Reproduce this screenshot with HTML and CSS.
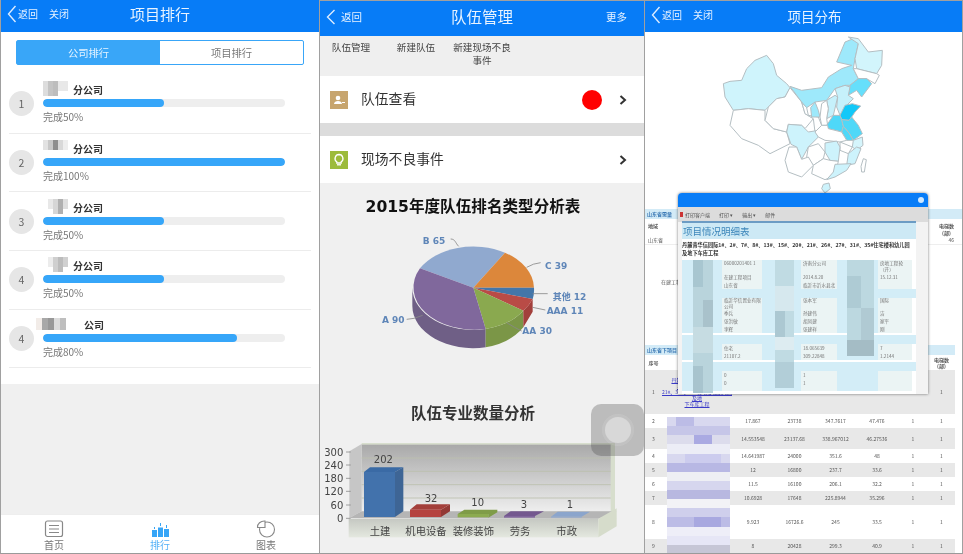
FILE: index.html
```html
<!DOCTYPE html>
<html lang="zh">
<head>
<meta charset="utf-8">
<title>项目排行 / 队伍管理 / 项目分布</title>
<link rel="stylesheet" href="styles.css">
</head>
<body>
<main class="screens">

<section class="panel rank">
  <header class="bar bar-a">
    <svg class="back" viewBox="0 0 10 18"><path d="M8.500 1 1.500 9l7 8"/></svg>
    <span class="bar-link">返回</span><span class="bar-link close">关闭</span>
    <h1 class="bar-title">项目排行</h1>
  </header>
  <div class="body-white">
    <div class="tabs"><span class="tab on">公司排行</span><span class="tab">项目排行</span></div>
    <ul class="list">
      <li class="item"><span class="num">1</span><div class="info">
        <div class="name"><svg class="mosaic" viewBox="0 0 6 3"><rect width="1" height="3" x="0" fill="#ddd"/><rect width="1" height="3" x="1" fill="#c4c4c4"/><rect width="1" height="3" x="2" fill="#bdbdbd"/><rect width="2" height="2" x="3" fill="#e8e8e8"/></svg><b>分公司</b></div>
        <div class="track"><div class="fill" style="width:50%"></div></div><div class="done">完成50%</div></div></li>
      <li class="item"><span class="num">2</span><div class="info">
        <div class="name"><svg class="mosaic" viewBox="0 0 6 3"><rect width="1" height="2" x="0" fill="#e2e2e2"/><rect width="1" height="2" x="1" fill="#c8c8c8"/><rect width="1" height="2" x="2" fill="#8e8e8e"/><rect width="1" height="2" x="3" fill="#d8d8d8"/><rect width="1" height="2" x="4" fill="#ededed"/></svg><b>分公司</b></div>
        <div class="track"><div class="fill" style="width:100%"></div></div><div class="done">完成100%</div></div></li>
      <li class="item"><span class="num">3</span><div class="info">
        <div class="name"><svg class="mosaic" viewBox="0 0 6 3"><rect width="1" height="2" x="1" fill="#e8e8e8"/><rect width="1" height="3" x="2" fill="#d6d6d6"/><rect width="1" height="3" x="3" fill="#b0b0b0"/><rect width="1" height="2" x="4" fill="#dedede"/></svg><b>分公司</b></div>
        <div class="track"><div class="fill" style="width:50%"></div></div><div class="done">完成50%</div></div></li>
      <li class="item"><span class="num">4</span><div class="info">
        <div class="name"><svg class="mosaic" viewBox="0 0 6 3"><rect width="1" height="2" x="1" fill="#ececec"/><rect width="1" height="3" x="2" fill="#cfcfcf"/><rect width="1" height="3" x="3" fill="#bcbcbc"/><rect width="1" height="2" x="4" fill="#d0d0d0"/></svg><b>分公司</b></div>
        <div class="track"><div class="fill" style="width:50%"></div></div><div class="done">完成50%</div></div></li>
      <li class="item"><span class="num">4</span><div class="info">
        <div class="name wide"><svg class="mosaic" viewBox="0 0 8 2"><rect width="1" height="2" fill="#f2ece8"/><rect width="1" height="2" x="1" fill="#a8a8a8"/><rect width="1" height="2" x="2" fill="#989898"/><rect width="1" height="2" x="3" fill="#dcdcdc"/><rect width="1" height="2" x="4" fill="#bebebe"/></svg><b>公司</b></div>
        <div class="track"><div class="fill" style="width:80%"></div></div><div class="done">完成80%</div></div></li>
    </ul>
  </div>
  <div class="filler"></div>
  <nav class="tabbar">
    <a class="tb-item"><svg class="tb-icon" viewBox="0 0 20 18"><rect x="1.500" y="1" width="17" height="15.500" rx="2" fill="none" stroke="#888" stroke-width="1.200"/><path d="M5 5.500h10M5 9h10M5 12.500h10" stroke="#888" stroke-width="1.200"/></svg>首页</a>
    <a class="tb-item active"><svg class="tb-icon" viewBox="0 0 20 18"><path d="M2 10h5v7H2zM8 7.500h5V17H8zM14 9h5v8h-5zM4 7h1v2H4zM10 3h1v3h-1zM16 5h1v3h-1z" fill="#36a5f7"/></svg>排行</a>
    <a class="tb-item"><svg class="tb-icon" viewBox="0 0 20 18"><circle cx="11" cy="9.500" r="7.500" fill="none" stroke="#888" stroke-width="1.100"/><path d="M1.500 7.500A7 6 0 0 1 9 1v6.500z" fill="#fff" stroke="#888" stroke-width="1.100"/></svg>图表</a>
  </nav>
</section>

<section class="panel team">
  <header class="bar bar-b">
    <svg class="back thin" viewBox="0 0 10 18"><path d="M8.500 2 1.500 9l7 7"/></svg>
    <span class="bar-link">返回</span>
    <h1 class="bar-title">队伍管理</h1>
    <span class="bar-more">更多</span>
  </header>
  <div class="subnav"><span class="sub s1">队伍管理</span><span class="sub s2">新建队伍</span><span class="sub s3">新建现场不良事件</span></div>
  <div class="row-link">
    <span class="ico tan"><svg viewBox="0 0 18 18"><circle cx="8" cy="7" r="2.300" fill="#fff"/><path d="M4 13c0-2 2-3 4-3s4 1 4 3zM12 11h3v1h-3z" fill="#fff"/></svg></span>
    <span class="row-text">队伍查看</span><span class="dot"></span><svg class="chev" viewBox="0 0 8 10"><path d="M1.500 1 6 5 1.500 9"/></svg>
  </div>
  <div class="gap"></div>
  <div class="row-link">
    <span class="ico green"><svg viewBox="0 0 18 18"><path d="M9 3.500a4 4 0 0 1 2.200 7.300V12H6.800v-1.200A4 4 0 0 1 9 3.500z" fill="none" stroke="#fff" stroke-width="1.300"/><path d="M7 13.800h4" stroke="#fff" stroke-width="1.300"/></svg></span>
    <span class="row-text">现场不良事件</span><svg class="chev push" viewBox="0 0 8 10"><path d="M1.500 1 6 5 1.500 9"/></svg>
  </div>
  <div class="charts">
    <h2 class="chart-title first">2015年度队伍排名类型分析表</h2>
    <svg class="pie" viewBox="0 0 840 480">
      <path d="M217 293A183 127 0 0 0 437 417V472A183 127 0 0 1 217 348Z" fill="#6f5f86"/>
      <path d="M437 417A183 127 0 0 0 550 362V412A183 127 0 0 1 437 472Z" fill="#7b9647"/>
      <path d="M550 362A183 127 0 0 0 578 327V365L550 412Z" fill="#a23f3b"/>
      <path d="M400 293L240 235A183 127 0 0 1 495 188Z" fill="#90a9cf"/>
      <path d="M400 293L495 188A183 127 0 0 1 582 293Z" fill="#dc873b"/>
      <path d="M400 293H582A183 127 0 0 1 578 327Z" fill="#4476a9"/>
      <path d="M400 293L578 327A183 127 0 0 1 550 362Z" fill="#b94b46"/>
      <path d="M400 293L550 362A183 127 0 0 1 437 417Z" fill="#8aa94f"/>
      <path d="M400 293L437 417A183 127 0 0 1 240 235Z" fill="#80689c"/>
      <g fill="none" stroke="#888" stroke-width="2.500">
        <path d="M332 147c14 0 14 12 24 22M560 232q20-12 42-14M578 311h45M578 352l38 8M500 398q24 15 45 25M200 388q20 0 48-12"/>
      </g>
      <g class="pie-label">
        <text x="248" y="161">B 65</text><text x="615" y="237">C 39</text><text x="638" y="331">其他 12</text><text x="620" y="373">AAA 11</text><text x="547" y="433">AA 30</text><text x="126" y="398">A 90</text>
      </g>
    </svg>
    <h2 class="chart-title second">队伍专业数量分析</h2>
    <svg class="bars" viewBox="0 0 975 252">
      <defs>
        <linearGradient id="wall" x1="0" y1="0" x2="0" y2="1"><stop offset="0" stop-color="#a9a9a9"/><stop offset="1" stop-color="#eeeeee"/></linearGradient>
        <linearGradient id="plate" x1="0" y1="0" x2="0" y2="1"><stop offset="0" stop-color="#c5c8c2"/><stop offset="1" stop-color="#e4e8df"/></linearGradient>
      </defs>
      <rect x="125" y="0" width="760" height="205" fill="#d7decd"/>
      <rect x="125" y="5" width="747" height="200" fill="url(#wall)"/>
      <path d="M88 25 125 3V205L88 225Z" fill="#c6c6c6"/>
      <path d="M88 225 125 205H890L835 227Z" fill="#b5b5b5"/>
      <rect x="86" y="227" width="749" height="56" fill="url(#plate)"/>
      <path d="M835 227 890 196V250L835 283Z" fill="#d6dccb"/>
      <path d="M125 45H872M125 85H872M125 125H872M125 165H872" stroke="#bcbfad" stroke-width="2.500"/>
      <path d="M78 27H92M78 66H92M78 106H92M78 145H92M78 186H92M78 226H92" stroke="#777" stroke-width="2"/>
      <g fill="#3e6595"><path d="M225 87 250 73V205L225 222Z"/></g>
      <path d="M132 87 150 73H250L225 87Z" fill="#3a6aa5"/>
      <rect x="132" y="87" width="93" height="135" fill="#4272ac"/>
      <path d="M363 200 390 184V205L363 222Z" fill="#933935"/><path d="M270 200 290 184H390L363 200Z" fill="#a33f3b"/><rect x="270" y="200" width="93" height="22" fill="#b5433f"/>
      <path d="M413 213 433 200H532L505 213ZM505 213 532 200V208L505 224Z" fill="#7f9c48"/><rect x="413" y="213" width="92" height="10" fill="#8cab50"/>
      <path d="M552 219 572 205H672L645 219Z" fill="#74588f"/><rect x="552" y="219" width="93" height="5" fill="#80659d"/>
      <path d="M693 221 713 206H810L785 221Z" fill="#8ba5cc"/><rect x="693" y="221" width="92" height="3" fill="#92abd0"/>
      <g class="axis">
        <text x="70" y="38">300</text><text x="70" y="77">240</text><text x="70" y="117">180</text><text x="70" y="156">120</text><text x="70" y="197">60</text><text x="70" y="237">0</text>
      </g>
      <g class="val">
        <text x="190" y="61">202</text><text x="333" y="176">32</text><text x="473" y="190">10</text><text x="612" y="195">3</text><text x="750" y="195">1</text>
      </g>
      <g class="cat">
        <text x="180" y="276">土建</text><text x="318" y="276">机电设备</text><text x="460" y="276">装修装饰</text><text x="600" y="276">劳务</text><text x="740" y="276">市政</text>
      </g>
    </svg>
  </div>
  <div class="assist"><span class="assist-ring"></span></div>
</section>

<section class="panel dist">
  <header class="bar bar-a">
    <svg class="back" viewBox="0 0 10 18"><path d="M8.500 1 1.500 9l7 8"/></svg>
    <span class="bar-link">返回</span><span class="bar-link close">关闭</span>
    <h1 class="bar-title">项目分布</h1>
  </header>
  <svg class="map" viewBox="0 96 954 520">
    <g stroke="#b4bec2" stroke-width="3" stroke-linejoin="round">
      <path fill="#cff4fc" d="M235 250 255 243 290 240 305 205 330 180 365 165 385 190 395 225 425 250 435 262 420 290 395 295 370 320 360 330 310 325 265 330 240 290Z"/>
      <path fill="#fff" d="M265 330 310 325 360 330 360 360 385 385 425 395 435 430 405 445 375 460 340 435 290 415 255 375Z"/>
      <path fill="#fff" d="M370 320 395 295 420 290 435 262 470 305 480 340 505 355 480 385 470 375 430 372 425 395 385 385 360 360Z"/>
      <path fill="#fff" d="M470 305 485 322 490 345 520 350 530 375 510 395 505 355 480 340Z"/>
      <path fill="#9ee9fb" d="M435 258 470 270 530 262 550 230 590 205 620 195 575 185 600 125 625 115 640 130 630 175 625 205 640 235 615 255 600 255 570 265 545 300 510 305 485 322 470 305Z"/>
      <path fill="#9ee9fb" d="M497 322 510 305 520 330 525 350 500 350Z"/>
      <path fill="#d2f5fc" d="M610 110 640 115 670 155 712 150 710 195 695 220 635 205 630 175 640 130Z"/>
      <path fill="#fff" d="M635 205 695 220 703 225 690 250 665 235 640 235 625 205Z"/>
      <path fill="#66dffb" d="M640 235 665 235 680 250 650 290 635 270 610 285 615 255Z"/>
      <path fill="#c6f1fb" d="M570 265 600 255 615 260 610 285 625 295 605 315 585 345 575 320 578 290Z"/>
      <path fill="#c6f1fb" d="M545 300 570 285 578 290 565 345 545 355 550 325Z"/>
      <path fill="#fff" d="M530 310 545 300 550 325 545 355 548 375 530 375 525 350Z"/>
      <path fill="#12c8f8" d="M585 345 600 315 622 310 647 317 630 335 620 350 612 360 590 358Z"/>
      <path fill="#4fd8f8" d="M545 375 565 345 585 345 590 358 595 378 590 395 570 390 550 385Z"/>
      <path fill="#4fd8f8" d="M590 358 612 360 620 350 640 375 652 400 625 420 612 398 595 378Z"/>
      <path fill="#4fd8f8" d="M590 395 595 378 612 398 625 420 605 420Z"/>
      <path fill="#cdf3fc" d="M430 372 470 375 480 385 490 395 520 390 520 410 490 440 470 477 455 440 438 432 425 395Z"/>
      <path fill="#fff" d="M510 395 530 375 548 375 550 385 570 390 590 395 605 420 585 425 540 420 520 410Z"/>
      <path fill="#d5f5fc" d="M625 420 652 410 654 435 635 450 622 440Z"/>
      <path fill="#fff" d="M585 425 622 440 610 460 585 450Z"/>
      <path fill="#cdf3fc" d="M540 428 575 422 585 440 580 483 555 480 540 455Z"/>
      <path fill="#cdf3fc" d="M610 460 635 440 648 445 630 490 605 495Z"/>
      <path fill="#fff" d="M490 440 520 430 540 455 535 475 505 495 485 470Z"/>
      <path fill="#fff" d="M432 440 455 440 470 477 490 470 505 495 470 530 430 515 420 480Z"/>
      <path fill="#fff" d="M505 495 535 475 555 480 580 483 570 525 540 538 500 520Z"/>
      <path fill="#cdf3fc" d="M570 492 618 490 605 510 570 530 545 538 565 515Z"/>
      <path fill="#cdf3fc" d="M535 552 552 548 556 565 540 578 530 565Z"/>
      <path fill="#fff" d="M655 475 664 478 658 515 650 515 648 498Z"/>
    </g>
  </svg>
  <div class="tables">
    <div class="t-head">山东省需量</div>
    <div class="t-meta"><span class="cell-a">地域</span><span class="cell-b">电梯数<br>(部)</span></div>
    <div class="t-meta second-row"><span class="cell-a">山东省</span><span class="cell-b">46</span></div>
    <div class="t-build">在建工程</div>
    <div class="t-head lower">山东省下项目</div>
    <table class="grid">
      <tr class="h"><th class="c1">序号</th><th class="c2"></th><th class="c3"></th><th class="c4"></th><th class="c5"></th><th class="c6"></th><th class="c7"></th><th class="c8">电梯数<br>(部)</th></tr>
      <tr class="alt tall"><td>1</td><td class="lk">丹麓华信园际1#、2#、<br>13#、15#、20#、<br>21#、31#、35#住宅楼和幼儿园及地<br>下车库工程</td><td>19.06</td><td>27107.2</td><td>309.22</td><td>54.2</td><td>1</td><td>1</td></tr>
      <tr><td>2</td><td></td><td>17.867</td><td>23738</td><td>347.7617</td><td>47.476</td><td>1</td><td>1</td></tr>
      <tr class="alt r3"><td>3</td><td></td><td>14.553548</td><td>23137.68</td><td>338.967012</td><td>46.27536</td><td>1</td><td>1</td></tr>
      <tr><td>4</td><td></td><td>14.641987</td><td>24000</td><td>351.6</td><td>48</td><td>1</td><td>1</td></tr>
      <tr class="alt"><td>5</td><td></td><td>12</td><td>16800</td><td>237.7</td><td>33.6</td><td>1</td><td>1</td></tr>
      <tr><td>6</td><td></td><td>11.5</td><td>16100</td><td>206.1</td><td>32.2</td><td>1</td><td>1</td></tr>
      <tr class="alt"><td>7</td><td></td><td>10.6928</td><td>17648</td><td>225.8944</td><td>35.296</td><td>1</td><td>1</td></tr>
      <tr class="r8"><td>8</td><td></td><td>9.923</td><td>16726.6</td><td>245</td><td>33.5</td><td>1</td><td>1</td></tr>
      <tr class="alt"><td>9</td><td></td><td>8</td><td>20428</td><td>299.3</td><td>40.9</td><td>1</td><td>1</td></tr>
    </table>
    <svg class="names" viewBox="0 0 7 15" preserveAspectRatio="none" shape-rendering="crispEdges">
      <g fill="#d8d8ef"><rect width="7" height="1"/><rect y="1" width="7" height="1" fill="#c6c6e8"/><rect y="2" width="7" height="1" fill="#dcdcec"/><rect y="3" width="7" height="1" fill="#ecedf6"/><rect y="4" width="7" height="1"/><rect y="5" width="7" height="1" fill="#b8b8e4"/><rect y="6" width="7" height="1" fill="#eeeff4"/><rect y="7" width="7" height="1" fill="#d6d6ee"/><rect y="8" width="7" height="1" fill="#b8b8e0"/><rect y="9" width="7" height="1" fill="#f2f2f6"/><rect y="10" width="7" height="1" fill="#cfcfec"/><rect y="11" width="7" height="1" fill="#bcbce6"/><rect y="12" width="7" height="1" fill="#eeeef8"/><rect y="13" width="7" height="1" fill="#e6e6f6"/><rect y="14" width="7" height="1" fill="#c6c6d6"/>
      <rect x="1" width="2" height="1" fill="#bcbce6"/><rect x="3" y="2" width="2" height="1" fill="#aaaae2"/><rect x="3" y="11" width="3" height="1" fill="#a8a8e0"/><rect x="2" y="4" width="4" height="1" fill="#ccccee"/></g>
    </svg>
  </div>

  <div class="modal">
    <div class="m-top"><span class="m-close"></span></div>
    <div class="m-tools"><span class="m-red"></span><span>打印客户端</span><span>打印 ▾</span><span>输出 ▾</span><span>邮件</span></div>
    <div class="m-body">
      <div class="m-title">项目情况明细表</div>
      <div class="m-sub">丹麓青华信园际1#、2#、7#、8#、13#、15#、20#、21#、26#、27#、31#、35#住宅楼和幼儿园及地下车库工程</div>
      <div class="m-row first"><i></i><span>06000201401 1</span><i></i><span>济南分公司</span><i></i><span>房地工程轮（开）</span></div>
      <div class="m-row"><i></i><span>在建工程项目</span><i></i><span>2014.8.20</span><i></i><span>15.12.31</span></div>
      <div class="m-row"><i></i><span>山东省</span><i></i><span>临沂市沂水县北</span><i></i><span></span></div>
      <div class="m-band"></div>
      <div class="m-row tall"><i></i><span>临沂华信置业有限公司</span><i></i><span>张本军</span><i></i><span>国际</span></div>
      <div class="m-row"><i></i><span>季兵</span><i></i><span>孙建伟</span><i></i><span>洁</span></div>
      <div class="m-row"><i></i><span>张洪敏</span><i></i><span>胡凤建</span><i></i><span>家平</span></div>
      <div class="m-row end"><i></i><span>李辉</span><i></i><span>张建祥</span><i></i><span>刚</span></div>
      <div class="m-band"></div>
      <div class="m-row"><i></i><span>住宅</span><i></i><span>18.065639</span><i></i><span>7</span></div>
      <div class="m-row end"><i></i><span>21107.2</span><i></i><span>309.22848</span><i></i><span>1.2144</span></div>
      <div class="m-band"></div>
      <div class="m-row"><i></i><span>0</span><i></i><span>1</span><i></i><span></span></div>
      <div class="m-row last"><i></i><span>0</span><i></i><span>1</span><i></i><span></span></div>
      <svg class="m-blur b1" viewBox="0 0 2 10" preserveAspectRatio="none" shape-rendering="crispEdges"><rect width="2" height="10" fill="#b9d4dc"/><rect width="1" height="2" fill="#a8c6d0"/><rect x="1" y="3" width="1" height="2" fill="#a9c2cb"/><rect y="5" width="2" height="2" fill="#c6dce2"/><rect y="8" width="1" height="2" fill="#a8c4ce"/></svg>
      <svg class="m-blur b2" viewBox="0 0 2 10" preserveAspectRatio="none" shape-rendering="crispEdges"><rect width="2" height="10" fill="#c0dbe3"/><rect y="2" width="2" height="2" fill="#d6e8ee"/><rect y="4" width="1" height="2" fill="#acc8d2"/><rect y="6" width="2" height="1" fill="#ddecf1"/><rect y="8" width="2" height="2" fill="#b2ced8"/></svg>
      <svg class="m-blur b3" viewBox="0 0 2 6" preserveAspectRatio="none" shape-rendering="crispEdges"><rect width="2" height="6" fill="#bcd8e0"/><rect y="1" width="1" height="2" fill="#aecbd4"/><rect x="1" y="3" width="1" height="2" fill="#b0cad3"/><rect y="5" width="2" height="1" fill="#a4bcc5"/></svg>
    </div>
  </div>
</section>
</main>
</body>
</html>
```

FILE: styles.css
```css
* { box-sizing: border-box; margin: 0; padding: 0; }
html, body { width: 963px; height: 554px; overflow: hidden; background: #fff; }
body { font-family: "Noto Sans CJK SC", "Noto Sans", sans-serif; color: #333; }

.screens { display: grid; grid-template-columns: 320px 325px 318px; height: 554px; }
.panel { position: relative; display: flex; flex-direction: column; height: 554px; overflow: hidden; border-bottom: 1px solid #9a9a9a; }
.rank { border-left: 1px solid #a0a0a0; border-right: 1px solid #a0a0a0; }
.team { border-top: 1px solid #a0a0a0; border-right: 1px solid #a0a0a0; }
.dist { border-top: 1px solid #a0a0a0; border-right: 1px solid #a0a0a0; }

.bar { position: relative; display: flex; align-items: center; flex: none; background: #077cf7; color: #e6f2ff; filter: blur(.35px); }
.bar-a { height: 32px; padding: 0 0 5px 6px; }
.dist .bar-a { height: 31px; padding-bottom: 4px; }
.bar-b { height: 35px; padding: 0 0 4px 6px; }
.back { width: 10px; height: 18px; margin-right: 1px; fill: none; stroke: #dcecff; stroke-width: 1.400; }
.back.thin { margin-right: 5px; }
.bar-link { font-size: 10px; line-height: 14px; }
.bar-b .bar-link { font-size: 10.500px; }
.close { margin-left: 11px; }
.bar-title { position: absolute; left: 0; right: 0; top: 0; line-height: 27px; text-align: center; font-size: 15px; font-weight: 400; color: #e8f3ff; }
.bar-b .bar-title { line-height: 30px; font-size: 15.500px; }
.dist .bar-title { left: 22px; font-size: 13.500px; line-height: 30px; }
.bar-more { margin-left: auto; margin-right: 17px; font-size: 10.500px; line-height: 14px; }

.body-white { height: 352px; background: #fff; flex: none; filter: blur(.35px); }
.tabs { display: flex; margin: 8px 15px 0 15px; height: 25px; border: 1px solid #39a6f8; border-radius: 2px; font-size: 10.300px; }
.tab { flex: 1; display: flex; align-items: center; justify-content: center; color: #777; }
.tab.on { background: #39a6f8; color: #e6f4ff; }
.list { list-style: none; margin: 10px 8px 0; }
.item { display: flex; align-items: center; height: 58.700px; border-bottom: 1px solid #ececec; }
.num { flex: none; width: 25px; height: 25px; border-radius: 50%; background: #e6e6e6; display: flex; align-items: center; justify-content: center; font-size: 10.500px; color: #666; }
.info { width: 242px; margin-left: 9px; }
.name { display: flex; align-items: center; height: 15px; font-size: 10px; color: #333; }
.name b { font-weight: 700; }
.mosaic { width: 30px; height: 15px; flex: none; margin-top: -2px; }
.name.wide { margin-left: -7px; }
.name.wide .mosaic { width: 48px; height: 12px; }
.track { height: 8px; margin-top: 2px; border-radius: 4px; background: #eee; overflow: hidden; }
.fill { height: 100%; border-radius: 4px; background: #36a6f9; }
.done { margin-top: 2px; font-size: 10px; line-height: 16px; color: #777; }
.filler { flex: 1; background: #f0f0f0; }
.tabbar { flex: none; height: 39px; background: #fff; display: grid; grid-template-columns: repeat(3, 1fr); border-top: 1px solid #eee; filter: blur(.3px); }
.tb-item { display: flex; flex-direction: column; align-items: center; font-size: 10px; line-height: 13px; color: #777; padding-top: 5px; }
.tb-item.active { color: #53b0f7; }
.tb-icon { width: 20px; height: 18px; flex: none; }

.subnav { flex: none; position: relative; height: 40px; background: #efefef; font-size: 9.600px; line-height: 13px; color: #444; display: flex; padding-top: 5px; filter: blur(.3px); }
.sub { text-align: center; }
.s1 { width: 40px; margin-left: 11px; }
.s2 { width: 40px; margin-left: 25px; }
.s3 { width: 60px; margin-left: 16px; }
.row-link { flex: none; display: flex; align-items: center; height: 47px; background: #fff; padding-left: 10px; filter: blur(.3px); }
.ico { width: 18px; height: 18px; flex: none; display: block; }
.ico svg { display: block; width: 18px; height: 18px; }
.tan { background: #c7a56e; }
.green { background: #9cbb3b; }
.row-text { margin: -4px 0 0 13px; font-size: 13.800px; color: #333; }
.dot { width: 20px; height: 20px; border-radius: 50%; background: #f00; margin-left: auto; }
.chev { width: 8px; height: 10px; flex: none; margin-left: 17px; margin-right: 17px; fill: none; stroke: #333; stroke-width: 2; }
.chev.push { margin-left: auto; }
.gap { flex: none; height: 13px; background: #dcdcdc; }
.charts { flex: 1; background: #f0f0f0; display: flex; flex-direction: column; align-items: center; filter: blur(.4px); }
.chart-title { font-family: "DejaVu Sans", "Noto Sans CJK SC", sans-serif; font-size: 15.600px; font-weight: 700; color: #111; line-height: 20px; white-space: nowrap; margin-right: 18px; }
.chart-title.first { margin-top: 14px; }
.chart-title.second { margin-top: 52px; font-family: "Noto Sans CJK SC", sans-serif; font-size: 15.500px; color: #333; }
.pie { display: block; width: 280px; height: 160px; flex: none; margin: -27px 4px 0 0; }
.pie-label { font: 700 27px "DejaVu Sans", "Noto Sans CJK SC", sans-serif; fill: #5f86b8; }
.bars { display: block; width: 325px; height: 84px; flex: none; margin-top: 21px; overflow: visible; }
.axis { font: 30px "DejaVu Sans", sans-serif; fill: #444; text-anchor: end; }
.val { font: 30px "DejaVu Sans", sans-serif; fill: #444; text-anchor: middle; }
.cat { font: 31px "Noto Sans CJK SC", sans-serif; fill: #444; text-anchor: middle; }
.assist { position: absolute; right: 0; top: 403px; width: 53px; height: 52px; border-radius: 10px; background: rgba(70, 70, 70, .3); display: flex; align-items: center; justify-content: center; filter: blur(.6px); }
.assist-ring { width: 26px; height: 26px; border-radius: 50%; background: #d8d8d8; box-shadow: 0 0 0 3px rgba(255, 255, 255, .1); }

.map { display: block; flex: none; width: 318px; height: 174px; filter: blur(.35px); }
.tables { position: relative; flex: 1; padding-top: 3px; font-size: 5px; color: #555; filter: blur(.45px); }
.t-head { height: 10px; line-height: 10px; background: #d3ebf7; color: #3b79b5; font-weight: 700; padding-left: 2px; }
.t-head.lower { width: 310px; }
.t-meta { display: flex; justify-content: space-between; padding: 3px 8px 0 3px; line-height: 7px; font-weight: 700; height: 16px; }
.t-meta.second-row { height: 10px; font-weight: 400; border-bottom: 1px solid #eee; padding-top: 1px; }
.cell-b { text-align: center; }
.t-build { height: 100px; padding: 33px 0 0 16px; }
.grid { border-collapse: collapse; width: 310px; table-layout: fixed; text-align: center; color: #555; }
.grid th, .grid td { padding: 0; font-weight: 400; height: 14px; line-height: 6px; }
.grid th { font-weight: 700; height: 15px; }
.c1 { width: 17px; } .c2 { width: 70px; } .c3 { width: 42px; } .c4 { width: 41px; } .c5 { width: 41px; } .c6 { width: 42px; } .c7 { width: 30px; } .c8 { width: 27px; }
.alt { background: #e8e8e8; }
.grid tr.tall td { height: 44px; }
.grid tr.r3 td { height: 21px; }
.grid tr.r8 td { height: 34px; }
.lk { color: #3a3ac8; text-decoration: underline; }
.names { position: absolute; left: 22px; top: 211px; width: 63px; height: 137px; }

.modal { position: absolute; left: 33px; top: 192px; width: 250px; height: 201px; background: #f3f3f3; border-radius: 4px 4px 0 0; box-shadow: 0 0 3px rgba(0, 0, 0, .55); overflow: hidden; filter: blur(.4px); }
.m-top { height: 14px; background: #077cf7; position: relative; }
.m-close { position: absolute; right: 4px; top: 4px; width: 6px; height: 6px; border-radius: 50%; background: #cfe8ff; }
.m-tools { height: 15px; display: flex; align-items: center; gap: 9px; padding-left: 2px; background: #dcdcdc; font-size: 5px; color: #555; }
.m-red { width: 3px; height: 5px; background: #c33; margin-right: -7px; }
.m-body { position: relative; margin: -1px 12px 0 4px; border-top: 2px solid #6c9cc4; background: #fff; height: 173px; }
.m-title { height: 16px; background: #cde9f5; color: #3c86ba; font-size: 9.500px; line-height: 16px; padding-left: 1px; }
.m-sub { height: 21px; font-size: 5.200px; line-height: 8px; font-weight: 700; color: #333; padding: 2px 2px 0 0; }
.m-row { display: grid; grid-template-columns: 40px 40px 39px 36px 41px 34px; height: 8px; font-size: 4.600px; line-height: 8px; color: #777; }
.m-row i { background: #d3edf7; }
.m-row span { background: #ebf4f4; padding-left: 2px; }
.m-row.tall { height: 11px; line-height: 5.500px; }
.m-row.first { height: 13px; line-height: 6px; }
.m-row.end { margin-bottom: 2px; }
.m-row.last { height: 12px; }
.m-band { height: 9px; background: #d3edf7; }
.m-blur { position: absolute; }
.b1 { left: 11px; top: 37px; width: 20px; height: 133px; }
.b2 { left: 93px; top: 37px; width: 19px; height: 128px; }
.b3 { left: 165px; top: 37px; width: 27px; height: 96px; }
```
